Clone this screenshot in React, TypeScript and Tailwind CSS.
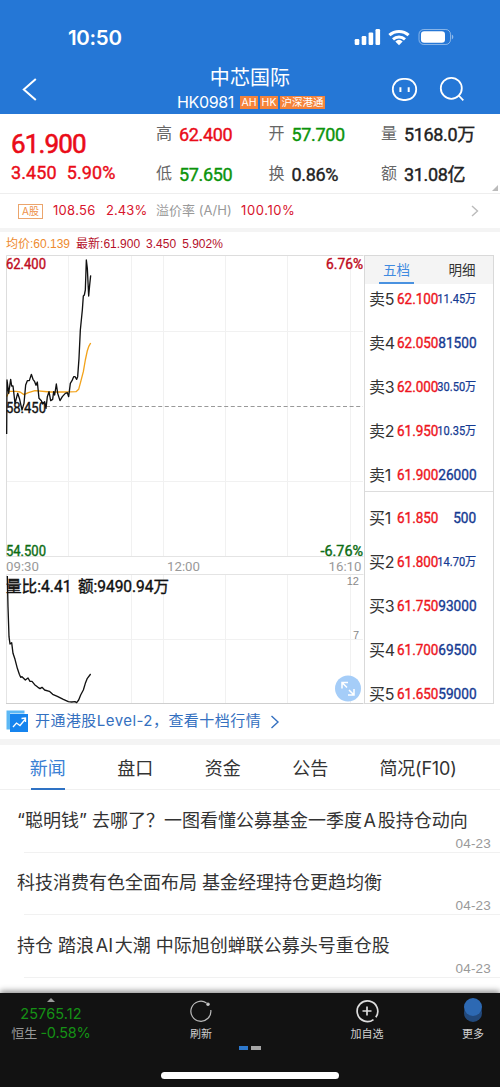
import React from "react";

const INTER = "font-['Inter','Noto_Sans_CJK_SC',sans-serif]";
const DIN = "font-['Roboto','Noto_Sans_CJK_SC',sans-serif]";
const HEL = "font-['Liberation_Sans','Noto_Sans_CJK_SC',sans-serif]";
const SEMI = "font-normal [-webkit-text-stroke:0.4px_currentColor]";

function StatusBar() {
  return (
    <div className="flex h-[74px] items-center justify-between pl-[68px] pr-[46px]">
      <span className="pt-px text-[20.5px] leading-6 font-semibold tracking-[-0.3px]">10:50</span>
      <svg width="100" height="18" viewBox="354 28 100 18" className="shrink-0" fill="white">
        <rect x="354.7" y="39" width="4.6" height="6" rx="1.2" />
        <rect x="361.7" y="36" width="4.6" height="9" rx="1.2" />
        <rect x="368.6" y="32.4" width="4.6" height="12.6" rx="1.2" />
        <rect x="375.5" y="29" width="4.6" height="16" rx="1.2" />
        <g fill="none" stroke="white" strokeWidth="3">
          <path d="M389.4 35.2a14 14 0 0 1 19.2 0" />
          <path d="M393 39.3a9 9 0 0 1 12 0" />
        </g>
        <path d="M395.3 41.5a5.6 5.6 0 0 1 7.4 0L399 45.2z" />
        <rect x="419" y="29.5" width="31.5" height="15" rx="4.8" fill="none" stroke="white" strokeOpacity=".45" />
        <rect x="421" y="31.3" width="24" height="11.4" rx="3.2" />
        <path d="M451.8 34.6c2 .8 2 4 0 4.8z" opacity=".5" />
      </svg>
    </div>
  );
}

function Header() {
  return (
    <header className={`h-[114px] shrink-0 bg-[#2577d6] text-white ${INTER}`}>
      <StatusBar />
      <div className="grid h-[40px] grid-cols-[140px_1fr_140px]">
        <svg width="40" height="40" viewBox="0 74 40 40" fill="none" stroke="white" strokeWidth="2">
          <path d="M35.8 79 23.8 89.5 35.8 100" />
        </svg>
        <div className="-mt-[10px] flex flex-col items-center">
          <h1 className="text-[20px] leading-[28px] tracking-[0.1px]">中芯国际</h1>
          <div className="flex items-center gap-[2px] pl-[2px]">
            <span className="mr-[4px] text-[16px] leading-5 tracking-[-0.35px]">HK0981</span>
            {["AH", "HK", "沪深港通"].map((t) => (
              <span key={t} className="flex h-[13px] items-center bg-[#f5833a] px-[1.5px] text-[10.5px] leading-[13px]">{t}</span>
            ))}
          </div>
        </div>
        <svg width="140" height="40" viewBox="360 74 140 40" fill="none" stroke="white" strokeWidth="1.8">
          <rect x="392.8" y="78.8" width="23.4" height="21.2" rx="10.4" />
          <path d="M400.4 87.3v4.7M408.7 87.3v4.7" strokeWidth="2" />
          <circle cx="451.3" cy="88.3" r="10.5" />
          <path d="m458.7 95.5 4.6 4.8" />
        </svg>
      </div>
    </header>
  );
}

function Stat({ label, value, color }: { label: string; value: string; color: string }) {
  return (
    <div className="flex h-10 items-center gap-[7px]">
      <span className="text-[16px] text-[#666]">{label}</span>
      <span className={`text-[18px] tracking-[-0.35px] ${SEMI} ${color}`}>{value}</span>
    </div>
  );
}

function Quote() {
  return (
    <section className={`relative flex h-[80px] shrink-0 border-b border-[#eeeeee] whitespace-nowrap ${DIN}`}>
      <div className={`w-[156px] pt-[14px] pl-[11px] text-[#ea0c18] ${SEMI}`}>
        <div className="text-[26px] leading-[32px] tracking-[-0.85px] [-webkit-text-stroke:0.6px_currentColor]">61.900</div>
        <div className="flex gap-[10px] text-[18px] leading-[25px] tracking-[0.1px]">
          <span>3.450</span>
          <span>5.90%</span>
        </div>
      </div>
      <div className="grid grid-cols-[112.5px_112.5px_110px]">
        <Stat label="高" value="62.400" color="text-[#ea0c18]" />
        <Stat label="开" value="57.700" color="text-[#0c940c]" />
        <Stat label="量" value="5168.0万" color="text-[#222]" />
        <Stat label="低" value="57.650" color="text-[#0c940c]" />
        <Stat label="换" value="0.86%" color="text-[#222]" />
        <Stat label="额" value="31.08亿" color="text-[#222]" />
      </div>
      <svg className="absolute right-[2.5px] bottom-[2px]" width="6" height="6" viewBox="0 0 6 6">
        <path d="M6 0v6H0z" fill="#bbb" />
      </svg>
    </section>
  );
}

function AShare() {
  return (
    <section className={`flex h-[34px] shrink-0 items-center pl-[18px] text-[13px] whitespace-nowrap text-[#d8142c] ${INTER}`}>
      <span className="flex h-[15px] w-[25px] items-center justify-center border border-[#eba56c] text-[10px] text-[#ee8f45]">A股</span>
      <span className="ml-[10px] w-[53px] tracking-[0.3px]">108.56</span>
      <span className="w-[50px] tracking-[0.1px]">2.43%</span>
      <span className="w-[85px] text-[#999]">溢价率 (A/H)</span>
      <span className="tracking-[0.6px]">100.10%</span>
      <svg className="ml-auto mr-[21px]" width="8" height="12" viewBox="0 0 8 12" fill="none" stroke="#bbb" strokeWidth="1.4">
        <path d="m1 1 5.5 5L1 11" />
      </svg>
    </section>
  );
}

const PRICE =
  "20,612 21,450 26,490 32,448 35,468 39,468 45,520 53,490 59,508 66,540 72,520 77,465 82,452 88,452 94,433 99,448 104,455 108,466 112,456 117,505 124,512 128,522 134,515 138,535 142,500 147,485 152,512 158,508 161,485 164,495 169,462 173,490 180,512 187,500 196,490 202,488 206,500 211,460 216,452 221,440 225,440 230,448 233,440 237,385 241,300 247,240 250,198 253,195 256,180 259,90 262,115 266,198 269,165 272,136";
const AVERAGE =
  "20,500 28,484 48,484 60,486 72,494 85,488 105,482 150,486 190,486 228,485 236,478 243,452 250,425 256,390 262,362 266,350 272,339";
const VOLUME =
  "22,108 24,200 27,290 30,312 35,308 39,340 45,358 52,385 58,403 62,412 66,410 76,420 84,414 90,424 96,424 104,434 114,442 120,446 126,442 134,450 148,454 158,463 172,469 190,478 205,485 215,486 225,485 230,488 236,480 242,465 250,450 256,430 262,415 272,402";

function Chart() {
  return (
    <svg width="364" height="449" viewBox="0 255 364 449" className={`shrink-0 ${DIN}`}>
      <g stroke="#f1f1f1" strokeWidth="1">
        {[68.5, 131.5, 163.5, 225.5, 287.5, 350.5].map((x) => (
          <path key={x} d={`M${x} 256V556M${x} 575V703`} />
        ))}
        <path d="M7 331.5H363M7 481.5H363M7 639.5H363" />
      </g>
      <g stroke="#dddddd" fill="none">
        <path d="M6.5 556.5V255.5H363.5" />
        <path d="M6.5 556.5H363.5M6.5 574.5H363.5M6.5 574.5V703.5" stroke="#e4e4e4" />
        <path d="M6 703.5H363.5" stroke="#cfcfcf" />
      </g>
      <path d="M46 406.5H363" stroke="#999" strokeDasharray="4 2.6" />
      <g fill="none" strokeWidth="4" strokeLinejoin="round">
        <polyline points={AVERAGE} transform="translate(0 230) scale(.33333)" stroke="#f2a31b" />
        <polyline points={PRICE} transform="translate(0 230) scale(.33333)" stroke="#111" />
        <polyline points={VOLUME} transform="translate(0 540) scale(.33333)" stroke="#111" />
      </g>
      <g fontSize="14" strokeWidth="0.4">
        <text x="6" y="269" fill="#c00d22" stroke="#c00d22" textLength="40" lengthAdjust="spacingAndGlyphs">62.400</text>
        <text x="326" y="269" fill="#c00d22" stroke="#c00d22" textLength="37" lengthAdjust="spacingAndGlyphs">6.76%</text>
        <text x="6" y="412.5" fill="#111" stroke="#111" textLength="40" lengthAdjust="spacingAndGlyphs">58.450</text>
        <text x="6" y="556" fill="#0d6d14" stroke="#0d6d14" textLength="40" lengthAdjust="spacingAndGlyphs">54.500</text>
        <text x="320.5" y="556" fill="#0d6d14" stroke="#0d6d14" textLength="42.5" lengthAdjust="spacingAndGlyphs">-6.76%</text>
      </g>
      <g fontSize="13.5" fill="#999">
        <text x="6" y="571" textLength="33" lengthAdjust="spacingAndGlyphs">09:30</text>
        <text x="167" y="571" textLength="33" lengthAdjust="spacingAndGlyphs">12:00</text>
        <text x="328.5" y="571" textLength="33" lengthAdjust="spacingAndGlyphs">16:10</text>
      </g>
      <g fontSize="16" fill="#111" stroke="#111" strokeWidth="0.4">
        <text x="6" y="592" textLength="65.5" lengthAdjust="spacingAndGlyphs">量比:4.41</text>
        <text x="78" y="592" textLength="91" lengthAdjust="spacingAndGlyphs">额:9490.94万</text>
      </g>
      <g fontSize="11" fill="#888" textAnchor="end" className={HEL}>
        <text x="359" y="585">12</text>
        <text x="359" y="639">7</text>
      </g>
      <circle cx="348" cy="688.5" r="13" fill="#a5cdf8" />
      <g stroke="white" strokeWidth="1.5" fill="none">
        <path d="M342 688.5V682.5H348M342 682.5 347 687.5M354 689V695H348M354 695 349 690" />
      </g>
    </svg>
  );
}

const ASKS = [
  ["卖5", "62.100", "11.45万"],
  ["卖4", "62.050", "81500"],
  ["卖3", "62.000", "30.50万"],
  ["卖2", "61.950", "10.35万"],
  ["卖1", "61.900", "26000"],
];
const BIDS = [
  ["买1", "61.850", "500"],
  ["买2", "61.800", "14.70万"],
  ["买3", "61.750", "93000"],
  ["买4", "61.700", "69500"],
  ["买5", "61.650", "59000"],
];

function Level({ row }: { row: string[] }) {
  const [name, price, volume] = row;
  const small = volume.endsWith("万");
  return (
    <div className="flex h-[18px] items-center whitespace-nowrap">
      <span className={`w-[27.5px] text-[16px] leading-[18px] tracking-[-0.3px] text-[#333] ${INTER}`}>{name}</span>
      <span className={`w-[41px] ${DIN}`}>
        <span className={`inline-block origin-left scale-x-[0.87] text-[15.5px] leading-[18px] text-[#ee1520] ${SEMI}`}>{price}</span>
      </span>
      <span className={`flex w-[39px] justify-end text-[#153a92] ${DIN} ${SEMI}`}>
        {small ? (
          <span className="inline-block origin-right scale-x-[0.9] text-[12.3px] leading-[18px] [-webkit-text-stroke:0.25px_currentColor]">{volume}</span>
        ) : (
          <span className="inline-block origin-right scale-x-[0.88] text-[15.5px] leading-[18px]">{volume}</span>
        )}
      </span>
    </div>
  );
}

function OrderBook() {
  return (
    <div className="flex h-[449px] w-[130px] flex-col border border-[#d9d9d9]">
      <div className={`grid h-[28px] shrink-0 grid-cols-2 bg-[#f4f4f4] text-center text-[13.5px] leading-[28px] ${INTER}`}>
        <span className="ml-[14px] mr-[15px] h-[28px] border-b-2 border-[#4a92e0] text-[#3f8ae0]">五档</span>
        <span className="pl-[2px] text-[#333]">明细</span>
      </div>
      <div className="flex h-[208px] shrink-0 flex-col justify-between border-b border-[#dddddd] pt-[6px] pb-[7.5px] pl-[4px]">
        {ASKS.map((r) => <Level key={r[0]} row={r} />)}
      </div>
      <div className="flex flex-1 flex-col justify-between pt-[17px] pl-[4px]">
        {BIDS.map((r) => <Level key={r[0]} row={r} />)}
      </div>
    </div>
  );
}

function LevelTwo() {
  return (
    <div className={`flex h-[35px] shrink-0 items-center pl-[6px] text-[15px] whitespace-nowrap text-[#3470c0] ${INTER}`}>
      <svg width="23" height="23" viewBox="0 0 23 23">
        <path d="M.5.5h18v3H4v16H.5z" fill="#5cb8f5" />
        <rect x="4" y="4" width="18" height="18" fill="#1684ee" />
        <path d="m7 17 3.5-4 3.5 2.5 5-6M15.5 8.5l4-.5v4" fill="none" stroke="white" strokeWidth="1.3" />
      </svg>
      <span className="ml-[6px] tracking-[0.45px]">开通港股Level-2，查看十档行情</span>
      <svg className="ml-[9px]" width="10" height="14" viewBox="0 0 10 14" fill="none" stroke="#3470c0" strokeWidth="1.4">
        <path d="m1.5 1 6.5 6-6.5 6" />
      </svg>
    </div>
  );
}

function Tabs() {
  return (
    <nav className={`flex h-[44.5px] shrink-0 border-b border-[#f0f0f0] pl-[4px] text-[18px] leading-[47px] whitespace-nowrap text-[#333] ${INTER}`}>
      <div className="flex w-[87.5px] justify-center">
        <span className="box-border h-[44.5px] w-[34px] border-b-2 border-[#2e72c4] text-[#3a80d4]"><span className="-ml-px">新闻</span></span>
      </div>
      <span className="w-[87.5px] text-center">盘口</span>
      <span className="w-[87.5px] text-center">资金</span>
      <span className="w-[87.5px] text-center">公告</span>
      <span className="w-[128px] text-center tracking-[-0.2px]">简况(F10)</span>
    </nav>
  );
}

const NEWS: React.ReactNode[] = [
  <>“聪明钱” 去哪了？一图看懂公募基金一季度<span className="px-[1.7px]">A</span>股持仓动向</>,
  <>科技消费有色全面布局 基金经理持仓更趋均衡</>,
  <>持仓 踏浪<span className="px-[1.7px]">AI</span>大潮 中际旭创蝉联公募头号重仓股</>,
];

function News() {
  return (
    <ul className={`h-[203.5px] shrink-0 ${INTER}`}>
      {NEWS.map((title, i) => (
        <li key={i} className="h-[62.5px] pt-[17px] whitespace-nowrap">
          <div className="pl-[17px] text-[18px] leading-[27px] text-[#333]">{title}</div>
          <div className={`ml-[24px] h-[19px] border-b border-[#f1f1f1] pr-[9px] text-right text-[13.5px] leading-[20px] tracking-[0.2px] text-[#999] ${HEL}`}>04-23</div>
        </li>
      ))}
    </ul>
  );
}

function Footer() {
  return (
    <footer className={`relative flex h-[94px] shrink-0 flex-col bg-[#121212] text-[#d0d0d0] shadow-[0_-2px_6px_rgba(0,0,0,0.45)] ${INTER}`}>
      <div className="flex h-[50px] whitespace-nowrap">
        <div className="flex w-[102px] flex-col items-center pt-[5px]">
          <svg width="10" height="5" viewBox="0 0 10 5"><path d="M5 0l5 5H0z" fill="#999" /></svg>
          <span className="mt-[2px] text-[14.5px] leading-[19px] tracking-[0.1px] text-[#159115]">25765.12</span>
          <span className="text-[14.5px] leading-[19px]"><span className="mr-[3px] text-[13px] text-[#999]">恒生</span><span className="tracking-[-0.2px] text-[#159115]">-0.58%</span></span>
        </div>
        <div className="ml-[59px] flex w-[80px] flex-col items-center">
          <svg width="24" height="34" viewBox="0 0 24 34" fill="none" stroke="#bbb" strokeWidth="1.2">
            <path d="M17.5 10A10 10 0 1 0 21.8 17" />
            <circle cx="19" cy="11.3" r="1.2" fill="#ddd" />
          </svg>
          <span className="text-[11px] leading-[14px]">刷新</span>
        </div>
        <div className="ml-[86px] flex w-[80px] flex-col items-center">
          <svg width="24" height="34" viewBox="0 0 24 34" fill="none" stroke="#ddd" strokeWidth="1.7">
            <path d="M20.8 24.3A10.3 10.3 0 1 0 18.5 26.6M12 13.5v9M7.5 18h9" />
          </svg>
          <span className="text-[11px] leading-[14px]">加自选</span>
        </div>
        <div className="ml-[39px] flex w-[54px] flex-col items-center">
          <svg width="24" height="34" viewBox="0 0 24 34">
            <circle cx="12" cy="20" r="9" fill="#22497c" />
            <circle cx="12" cy="14" r="9" fill="#2d69b3" />
          </svg>
          <span className="text-[11px] leading-[14px]">更多</span>
        </div>
      </div>
      <div className="mt-[3px] ml-[238.5px] flex gap-[3px]">
        <span className="h-[4px] w-[9.5px] bg-[#2d78cc]" />
        <span className="h-[4px] w-[9.5px] bg-[#a5a5a5]" />
      </div>
      <div className="mx-auto mt-[21.5px] h-[7px] w-[178px] rounded-full bg-white" />
    </footer>
  );
}

export default function App() {
  return (
    <div className="flex h-[1087px] w-[500px] flex-col overflow-hidden bg-white">
      <Header />
      <Quote />
      <AShare />
      <div className="h-[4px] shrink-0 bg-[#f4f4f4]" />
      <div className={`flex h-[23px] shrink-0 items-center gap-[6px] pl-[6px] text-[12px] whitespace-nowrap text-[#b5102a] ${HEL}`}>
        <span className="text-[#ee8a2e]">均价:60.139</span>
        <span>最新:61.900</span>
        <span>3.450</span>
        <span>5.902%</span>
      </div>
      <div className="flex h-[449px] shrink-0">
        <Chart />
        <OrderBook />
      </div>
      <LevelTwo />
      <div className="h-[6px] shrink-0 bg-[#f4f4f4]" />
      <Tabs />
      <News />
      <Footer />
    </div>
  );
}
